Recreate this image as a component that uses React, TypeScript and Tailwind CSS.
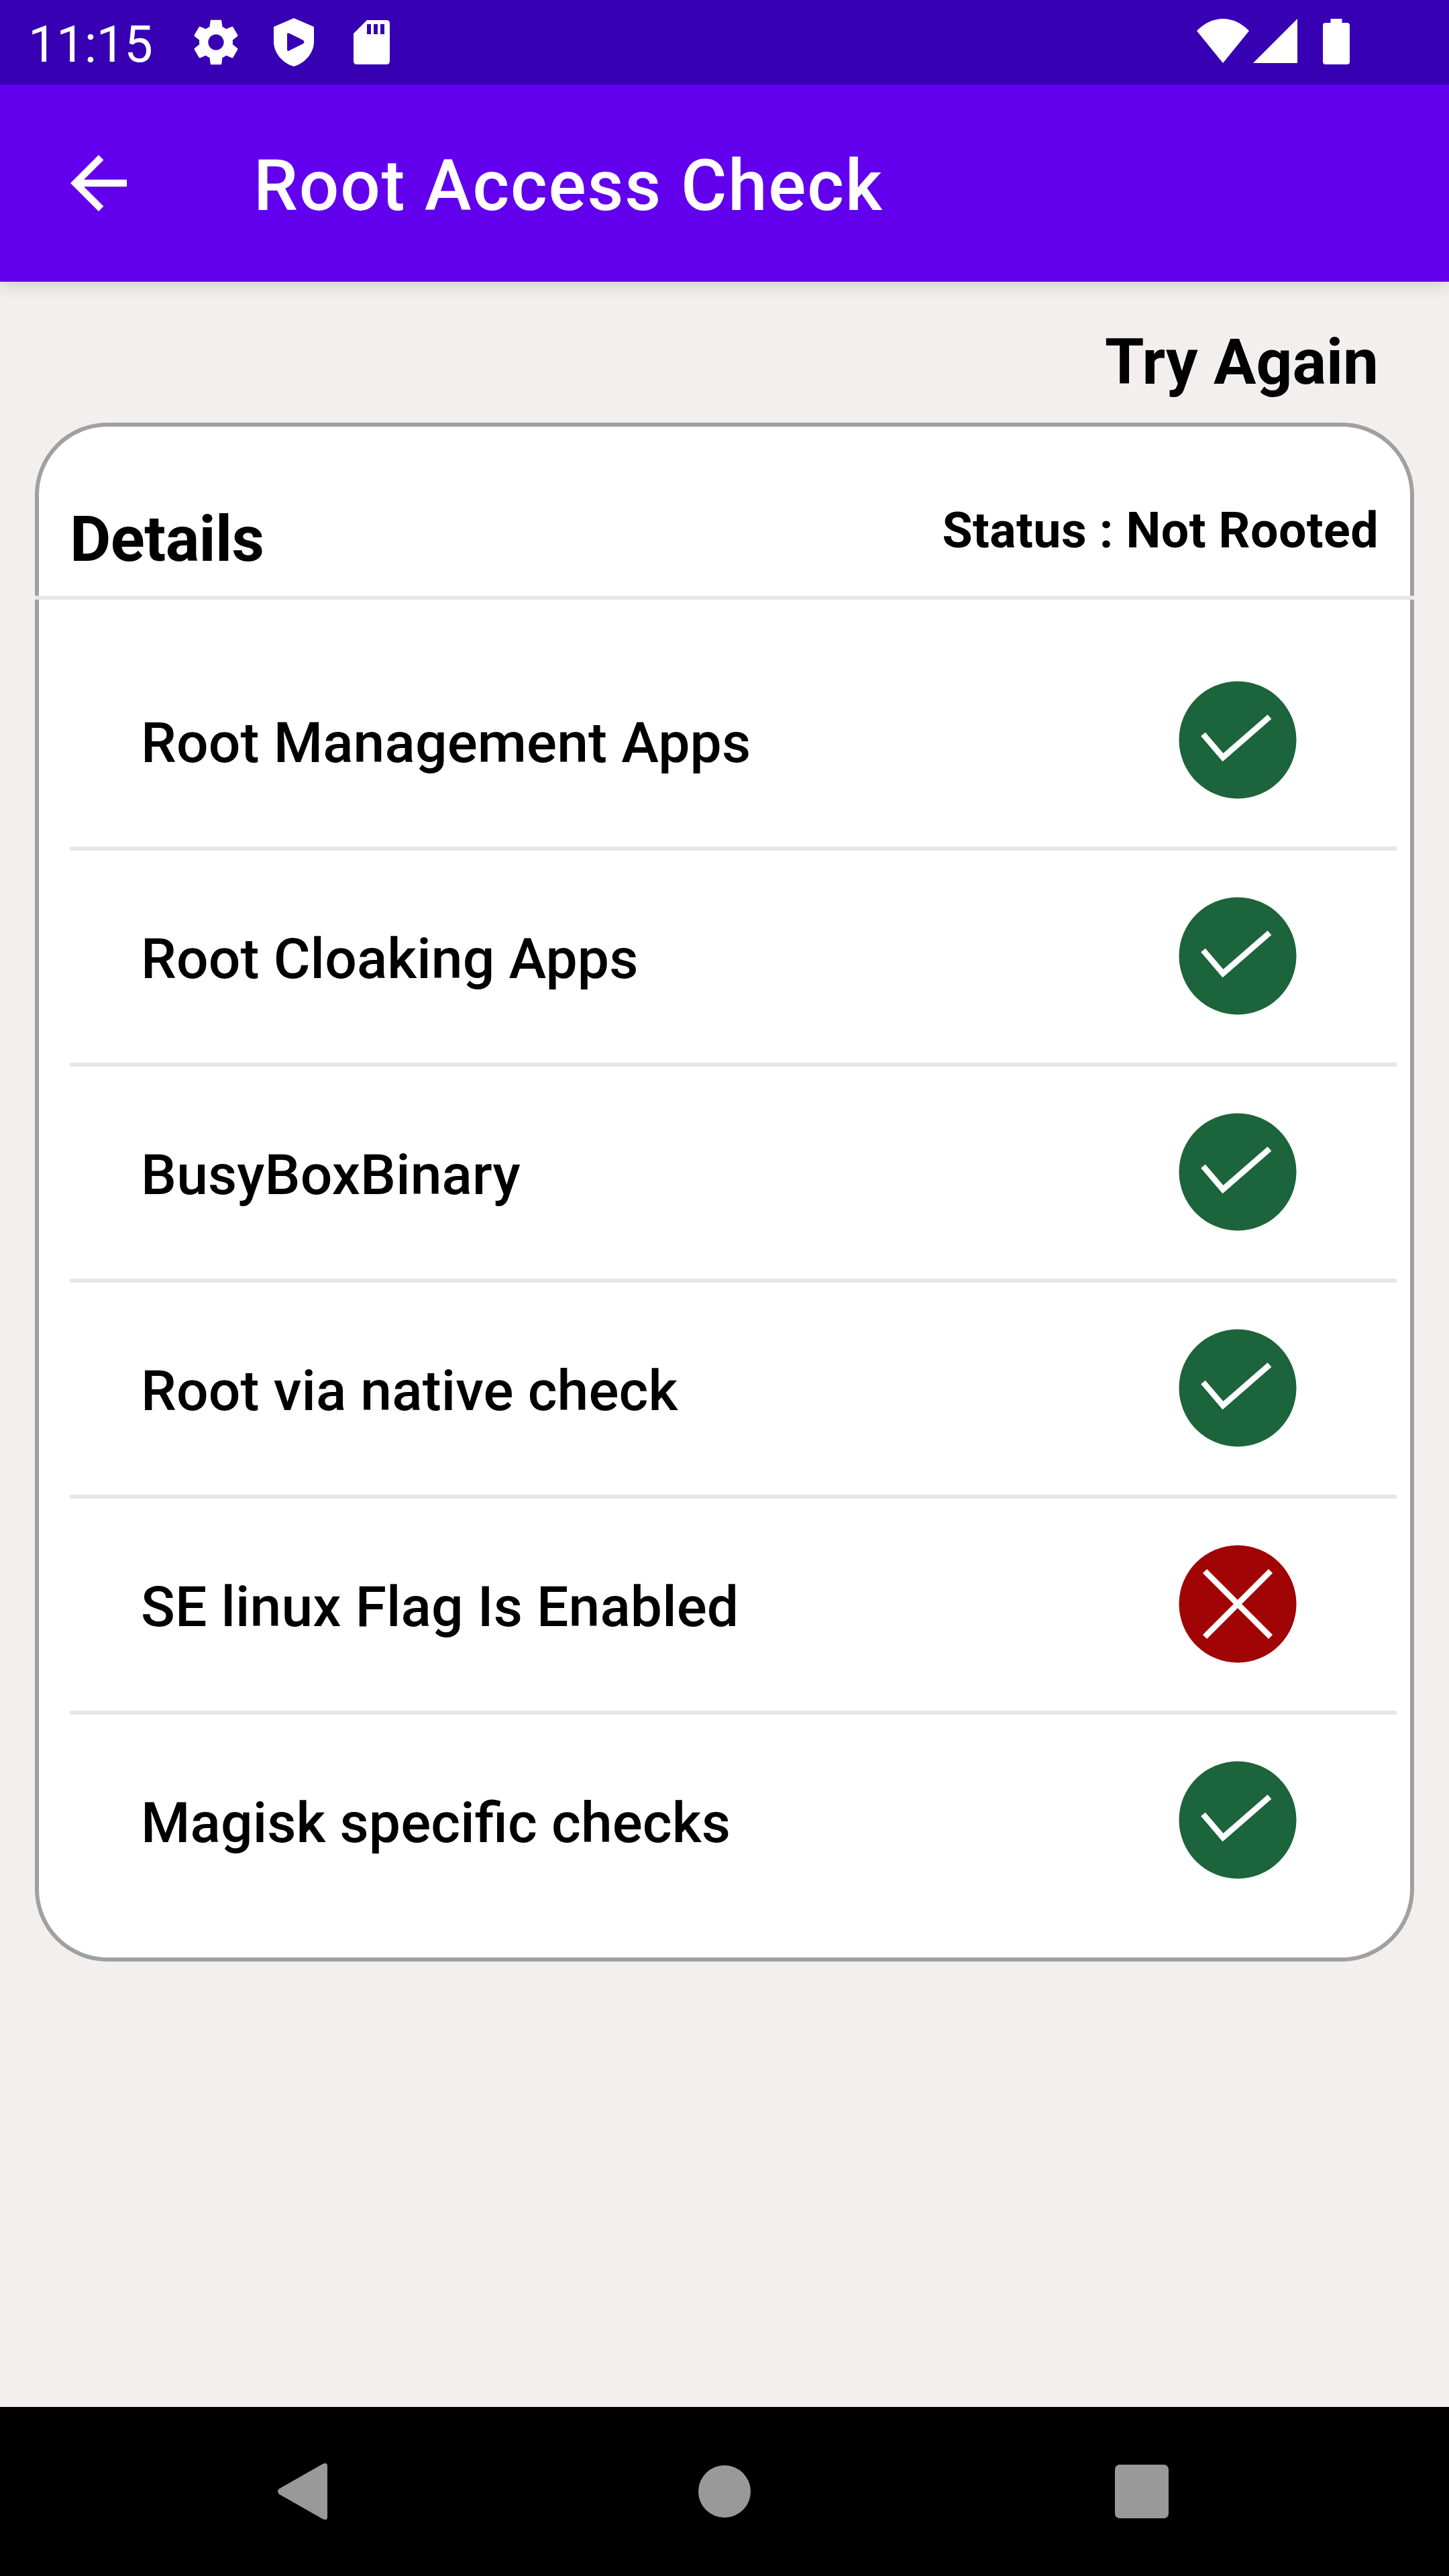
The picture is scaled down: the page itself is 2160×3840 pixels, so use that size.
const checks = [
  { label: 'Root Management Apps', ok: true },
  { label: 'Root Cloaking Apps', ok: true },
  { label: 'BusyBoxBinary', ok: true },
  { label: 'Root via native check', ok: true },
  { label: 'SE linux Flag Is Enabled', ok: false },
  { label: 'Magisk specific checks', ok: true },
];

function StatusIcon({ ok }: { ok: boolean }) {
  return (
    <svg className="mb-[3px] block h-[176px] w-[176px] shrink-0" viewBox="0 0 176 176" fill="none" stroke="#fff">
      <circle cx="88" cy="88" r="87.5" fill={ok ? '#1c643b' : '#a00405'} stroke="none" />
      {ok ? (
        <path d="M36.5 79.5L66 114L135.5 53.5" strokeWidth="8.7" />
      ) : (
        <path d="M39 39L137 137M137 39L39 137" strokeWidth="8.7" />
      )}
    </svg>
  );
}

function StatusBar() {
  return (
    <div className="relative z-10 flex h-[126px] shrink-0 items-center bg-[#3700b3] text-white">
      <div className="w-[282px] shrink-0 pt-[6px] pl-[42px] text-[76px] leading-none tracking-[-0.8px] whitespace-nowrap">11:15</div>
      <svg className="h-[80px] w-[80px]" viewBox="0 0 24 24" fill="currentColor">
        <path d="M19.43 12.98c.04-.32.07-.64.07-.98s-.03-.66-.07-.98l2.11-1.65c.19-.15.24-.42.12-.64l-2-3.46c-.12-.22-.39-.3-.61-.22l-2.49 1c-.52-.4-1.08-.73-1.69-.98l-.38-2.65C14.46 2.18 14.25 2 14 2h-4c-.25 0-.46.18-.49.42l-.38 2.65c-.61.25-1.17.59-1.69.98l-2.49-1c-.23-.09-.49 0-.61.22l-2 3.46c-.13.22-.07.49.12.64l2.11 1.65c-.04.32-.07.65-.07.98s.03.66.07.98l-2.11 1.65c-.19.15-.24.42-.12.64l2 3.46c.12.22.39.3.61.22l2.49-1c.52.4 1.08.73 1.69.98l.38 2.65c.03.24.24.42.49.42h4c.25 0 .46-.18.49-.42l.38-2.65c.61-.25 1.17-.59 1.69-.98l2.49 1c.23.09.49 0 .61-.22l2-3.46c.12-.22.07-.49-.12-.64l-2.11-1.65zM12 15.5c-1.93 0-3.5-1.57-3.5-3.5s1.57-3.5 3.5-3.5 3.5 1.57 3.5 3.5-1.57 3.5-3.5 3.5z" />
      </svg>
      <svg className="ml-[46px] h-[74px] w-[60px]" viewBox="0 0 60 74" fill="currentColor" fillRule="evenodd">
        <path d="M30 1L60 14V36C60 53 47 68 30 73C13 68 0 53 0 36V14ZM20 25V47Q20 52 24 49L44 39Q47 37 44 34L24 24Q20 22 20 25Z" />
      </svg>
      <svg className="ml-[59px] h-[66px] w-[54px]" viewBox="0 0 54 66" fill="currentColor" fillRule="evenodd">
        <path d="M20 0H49Q54 0 54 5V61Q54 66 49 66H5Q0 66 0 61V20ZM20 6V21H26V6ZM30 6V21H36V6ZM40 6V21H46V6Z" />
      </svg>
      <svg className="mb-[4px] ml-auto h-[66px] w-[78px]" viewBox="0 0 78 66" fill="currentColor">
        <path d="M0 18C23 -6 55 -6 78 18L39 66Z" />
      </svg>
      <svg className="mb-[4px] ml-[6px] h-[66px] w-[66px]" viewBox="0 0 66 66" fill="currentColor">
        <path d="M66 0V66H0Z" />
      </svg>
      <svg className="mr-[148px] mb-[2px] ml-[38px] h-[68px] w-[40px]" viewBox="0 0 40 68" fill="currentColor">
        <path d="M11.5 0H28.5V6H36Q40 6 40 10V64Q40 68 36 68H4Q0 68 0 64V10Q0 6 4 6H11.5Z" />
      </svg>
    </div>
  );
}

export default function App() {
  return (
    <div className="flex h-[3840px] w-[2160px] flex-col overflow-hidden bg-[#f3efee] font-[Roboto,sans-serif] text-black">
      <StatusBar />
      <header className="relative flex h-[294px] shrink-0 items-center bg-[#6200ee] text-white shadow-[0_4px_24px_rgba(0,0,0,0.16)]">
        <svg className="ml-[105px] h-[84px] w-[84px]" viewBox="0 0 16 16" fill="currentColor">
          <path d="M16 7H3.83l5.59-5.59L8 0 0 8l8 8 1.41-1.41L3.83 9H16z" />
        </svg>
        <h1 className="ml-[189px] pt-[9px] text-[105px] leading-none font-medium tracking-[1.75px] whitespace-nowrap">Root Access Check</h1>
      </header>
      <main className="flex flex-1 flex-col">
        <div className="flex h-[210px] shrink-0 justify-end pt-[73px] pr-[105px] text-[94.5px] leading-none font-bold">Try Again</div>
        <section className="mx-[52px] h-[2294px] rounded-[108px] border-[6px] border-[#a0a0a0] bg-white">
          <div className="-mx-[6px] flex h-[258px] justify-between border-b-[6px] border-[#e5e7e8] pr-[53px] pl-[52px] leading-none">
            <h2 className="pt-[121px] text-[94.5px] font-bold tracking-[-0.6px]">Details</h2>
            <p className="pt-[119px] text-[73.5px] font-bold tracking-[0.4px]">Status : Not Rooted</p>
          </div>
          <ul className="mr-[20px] ml-[46px] pt-[52px]">
            {checks.map((c) => (
              <li key={c.label} className="flex h-[322px] items-center justify-between border-b-[6px] border-[#e5e7e8] pr-[149px] pl-[106px] last:border-transparent">
                <span className="pt-[7px] text-[84px] leading-none font-medium tracking-[0.12px] [font-feature-settings:'liga'_1]">{c.label}</span>
                <StatusIcon ok={c.ok} />
              </li>
            ))}
          </ul>
        </section>
      </main>
      <nav className="flex h-[252px] shrink-0 items-center bg-black text-[#999]">
        <svg className="ml-[413px] h-[84px] w-[75px]" viewBox="0 0 75 84" fill="currentColor">
          <path d="M68 1Q75 -2 75 4V80Q75 86 68 83L3 46Q-1 42 3 38Z" />
        </svg>
        <div className="ml-[553px] h-[78px] w-[78px] rounded-full bg-current" />
        <div className="ml-[543px] h-[80px] w-[80px] rounded-[7px] bg-current" />
      </nav>
    </div>
  );
}
